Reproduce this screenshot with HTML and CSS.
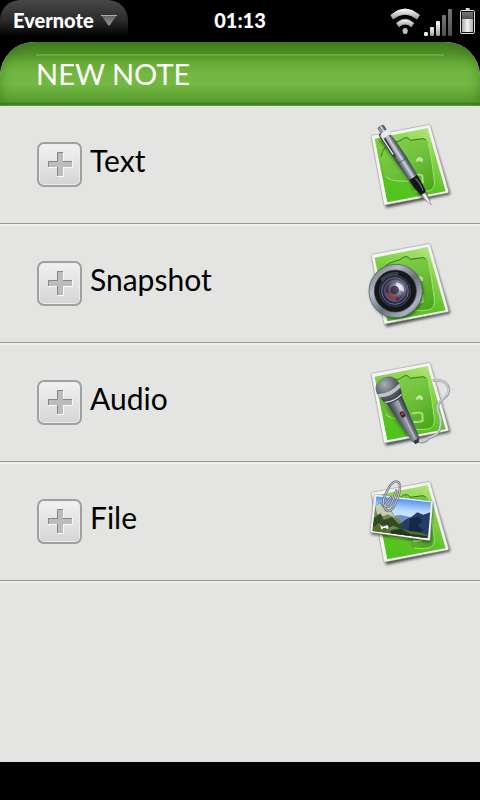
FILE: index.html
```html
<!DOCTYPE html>
<html lang="en">
<head>
<meta charset="utf-8">
<meta name="viewport" content="width=device-width, initial-scale=1">
<title>Evernote</title>
<link rel="stylesheet" href="styles.css">
</head>
<body>
<svg class="defs" aria-hidden="true">
  <defs>
    <linearGradient id="green" x1="0.8" y1="0" x2="0.4" y2="1">
      <stop offset="0" stop-color="#b4e67c"/><stop offset=".35" stop-color="#85d34a"/><stop offset=".7" stop-color="#5fc226"/><stop offset="1" stop-color="#4fc41a"/>
    </linearGradient>
    <linearGradient id="gloss" x1="0" y1="0" x2="1" y2="1">
      <stop offset="0" stop-color="#87d14e"/><stop offset=".5" stop-color="#6dbf38"/><stop offset="1" stop-color="#3f9a18"/>
    </linearGradient>
    <linearGradient id="metal" x1="0" y1="0" x2="1" y2="0">
      <stop offset="0" stop-color="#333943"/><stop offset=".3" stop-color="#7d8793"/><stop offset=".55" stop-color="#d0d6dc"/><stop offset=".75" stop-color="#707a88"/><stop offset="1" stop-color="#363b45"/>
    </linearGradient>
    <linearGradient id="tip" x1="0" y1="0" x2="1" y2="0">
      <stop offset="0" stop-color="#6b6b6b"/><stop offset=".5" stop-color="#fff"/><stop offset="1" stop-color="#555"/>
    </linearGradient>
    <linearGradient id="ring" x1="0" y1="0" x2="1" y2="1">
      <stop offset="0" stop-color="#59606c"/><stop offset=".3" stop-color="#b4bcc8"/><stop offset=".55" stop-color="#69717f"/><stop offset=".8" stop-color="#a9b1be"/><stop offset="1" stop-color="#4f5663"/>
    </linearGradient>
    <radialGradient id="lens" cx=".6" cy=".4" r=".6">
      <stop offset="0" stop-color="#e2e6ee"/><stop offset=".35" stop-color="#7c8297"/><stop offset=".65" stop-color="#4a2f43"/><stop offset="1" stop-color="#182a4c"/>
    </radialGradient>
    <radialGradient id="head" cx=".45" cy=".25" r=".75">
      <stop offset="0" stop-color="#c3c8cc"/><stop offset=".5" stop-color="#757b80"/><stop offset="1" stop-color="#35393d"/>
    </radialGradient>
    <linearGradient id="sky" x1="0" y1="0" x2="0" y2="1">
      <stop offset="0" stop-color="#2f7bea"/><stop offset=".55" stop-color="#b9d9fb"/><stop offset="1" stop-color="#e4f1fd"/>
    </linearGradient>
    <linearGradient id="signal" x1="0" y1="0" x2="0" y2="1">
      <stop offset="0" stop-color="#fff"/><stop offset="1" stop-color="#999"/>
    </linearGradient>
    <linearGradient id="dim" x1="0" y1="0" x2="0" y2="1">
      <stop offset="0" stop-color="#777"/><stop offset="1" stop-color="#505050"/>
    </linearGradient>
    <linearGradient id="cell" x1="0" y1="0" x2="1" y2="0">
      <stop offset="0" stop-color="#aaa"/><stop offset=".5" stop-color="#f4f4f4"/><stop offset="1" stop-color="#aaa"/>
    </linearGradient>
    <linearGradient id="arrow" x1="0" y1="0" x2="0" y2="1">
      <stop offset="0" stop-color="#5f5f5f"/><stop offset="1" stop-color="#969696"/>
    </linearGradient>
    <pattern id="mesh" width="6" height="6" patternUnits="userSpaceOnUse">
      <path d="M0 0L6 6M6 0L0 6" stroke="#25292c" stroke-opacity=".45" fill="none"/>
    </pattern>
    <filter id="soft" x="-20%" y="-20%" width="140%" height="140%"><feGaussianBlur stdDeviation="4"/></filter>
    <clipPath id="sheet"><path d="M44 80L203 48L257 238L82 271Z"/></clipPath>
    <clipPath id="photo"><path d="M49 82L213 100L204 208L37 186Z"/></clipPath>
    <symbol id="card" viewBox="0 0 300 330">
      <path d="M38 76L208 43L271 247L78 287Z" fill="#000" opacity=".7" filter="url(#soft)"/>
      <path d="M36 70Q33 71 34 75L71 276Q72 280 76 279L263 243Q267 242 266 238L211 41Q210 37 206 38Z" fill="#f4f5f3" stroke="#999" stroke-width="1.500"/>
      <path d="M44 80L203 48L257 238L82 271Z" fill="url(#green)"/>
      <g clip-path="url(#sheet)">
        <path d="M62 133Q63 103 99 91L120 86Q132 76 141 77Q147 80 150 85L188 80Q199 79 204 90Q216 141 224 205Q226 231 206 238L163 239Q148 238 153 218L126 207Q88 207 76 190Q64 165 62 133Z" fill="url(#gloss)" opacity=".8"/>
        <path d="M64 134Q67 100 104 91L120 86Q132 75 141 77Q146 78 150 85L180 81Q193 78 197 84" fill="none" stroke="#357713" stroke-width="3"/>
        <path d="M205 94Q216 141 223 205Q226 232 205 237Q184 241 162 237M76 192Q89 207 126 207L146 208" fill="none" stroke="#a9e07c" stroke-width="3"/>
        <path d="M155 191Q185 184 187 192L188 212Q178 218 160 215" fill="none" stroke="#a9e07c" stroke-width="6"/>
        <path d="M168 148Q172 134 183 137Q190 140 187 149Q178 143 168 148Z" fill="#bce79a" stroke="#bce79a" stroke-width="3"/>
      </g>
    </symbol>
  </defs>
</svg>

<header class="status">
  <button class="app-menu" type="button">Evernote
    <svg class="caret" viewBox="0 0 16 11" aria-hidden="true"><path d="M0 0H16L9 10Q8 11 7 10Z" fill="url(#arrow)"/><path d="M0 .5H16" stroke="#aaa"/></svg>
  </button>
  <time class="clock">01:13</time>
  <svg class="indicators" viewBox="0 0 270 96" role="img" aria-label="Wi-Fi, signal and battery">
    <path d="M3 27Q45-9 88 27L81 39Q45 10 9 39Z" fill="url(#signal)" stroke="url(#signal)" stroke-width="3" stroke-linejoin="round"/>
    <path d="M20 51Q45 28 71 51L64 62Q45 46 27 62Z" fill="url(#signal)" stroke="#aaa" stroke-width="3" stroke-linejoin="round"/>
    <rect x="38" y="66" width="15" height="18" rx="7" fill="#bbb"/>
    <rect x="102" y="78" width="12" height="12" rx="4" fill="#eee"/>
    <rect x="120" y="63" width="12" height="27" rx="4" fill="url(#signal)"/>
    <rect x="138" y="45" width="12" height="45" rx="4" fill="url(#signal)"/>
    <rect x="156" y="27" width="12" height="63" rx="4" fill="url(#dim)"/>
    <rect x="174" y="9" width="12" height="81" rx="4" fill="url(#dim)"/>
    <rect x="227" y="6" width="12" height="9" rx="2" fill="#ddd"/>
    <rect x="211.500" y="13.500" width="42" height="69" rx="4" fill="#111" stroke="#ddd" stroke-width="3"/>
    <rect x="216" y="18" width="33" height="21" fill="url(#dim)"/>
    <rect x="216" y="39" width="33" height="39" fill="url(#cell)"/>
  </svg>
</header>

<main class="panel">
  <div class="title-bar"><h1 class="title">NEW NOTE</h1></div>
  <ul class="notes">
    <li class="note">
      <button class="add" id="add-text" type="button"><svg viewBox="0 0 26 26" aria-hidden="true"><use href="#plus"/></svg></button>
      <label class="name" for="add-text">Text</label>
      <svg class="picture" viewBox="0 0 300 330" aria-hidden="true">
        <use href="#card" width="300" height="330"/>
        <path d="M64 78L156 201L193 258" stroke="#163c04" stroke-width="20" opacity=".5" filter="url(#soft)"/>
        <g transform="translate(63 46) rotate(-32.500)">
          <rect x="-10" y="-4" width="20" height="25" rx="5" fill="url(#metal)" stroke="#444"/>
          <path d="M-13 18H12Q17 70 17 118L15 182H-14L-17 118Q-18 70-13 18Z" fill="url(#metal)"/>
          <path d="M-17 119H17" stroke="#3d4550" stroke-width="2"/>
          <path d="M-14 179H15Q15 215 9 237H-8Q-15 207-14 179Z" fill="#15171b"/>
          <path d="M5 184Q10 207 4 228" stroke="#61656c" stroke-width="4" fill="none"/>
          <path d="M-9 236H10L6 260L2 277L-4 260Z" fill="url(#tip)" stroke="#555"/>
          <path d="M-14 13L-19 18L-17 92Q-13 103-8 93L-6 20Z" fill="#30363e"/>
          <path d="M-14 19L-13 89" stroke="#e5e8eb" stroke-width="4"/>
          <path d="M-12 17Q2 11 16 17L15 35Q1 28-12 34Z" fill="#e8eaec"/>
          <path d="M-7 0V13" stroke="#aab0b6" stroke-width="4"/>
        </g>
      </svg>
    </li>
    <li class="note">
      <button class="add" id="add-snapshot" type="button"><svg viewBox="0 0 26 26" aria-hidden="true"><use href="#plus"/></svg></button>
      <label class="name" for="add-snapshot">Snapshot</label>
      <svg class="picture" viewBox="0 0 300 330" aria-hidden="true">
        <use href="#card" width="300" height="330"/>
        <circle cx="110" cy="185" r="80" fill="#000" opacity=".5" filter="url(#soft)"/>
        <circle cx="107" cy="180" r="80" fill="url(#ring)" stroke="#4a505b" stroke-width="2"/>
        <circle cx="106" cy="180" r="63" fill="#15171b" stroke="#333b46" stroke-width="2"/>
        <path d="M60 145Q80 121 116 123L112 138Q86 139 71 157Z" fill="#555c60" opacity=".6"/>
        <circle cx="105" cy="180" r="47" fill="#25272c" stroke="#4c4c50" stroke-width="2"/>
        <circle cx="105" cy="180" r="40" fill="url(#lens)" stroke="#5475a4" stroke-width="3"/>
        <circle cx="105" cy="180" r="31" fill="none" stroke="#7589ad" stroke-width="2"/>
        <path d="M110 154Q134 161 132 182L114 173Q104 164 110 154Z" fill="#eceff4" opacity=".85"/>
        <path d="M76 184Q80 208 103 211Q113 203 104 191Z" fill="#a54955" opacity=".65"/>
        <circle cx="104" cy="177" r="13" fill="#202236" opacity=".75"/>
      </svg>
    </li>
    <li class="note">
      <button class="add" id="add-audio" type="button"><svg viewBox="0 0 26 26" aria-hidden="true"><use href="#plus"/></svg></button>
      <label class="name" for="add-audio">Audio</label>
      <svg class="picture" viewBox="0 0 300 330" aria-hidden="true">
        <use href="#card" width="300" height="330"/>
        <path d="M218 91Q259 86 267 118Q268 132 250 147Q228 162 235 184Q249 211 239 239Q230 260 207 264Q195 282 173 274" fill="none" stroke="#959da5" stroke-width="8"/>
        <path d="M218 90Q258 86 266 118Q266 132 249 146Q227 162 234 184Q248 211 238 238Q229 258 206 262Q194 279 173 272" fill="none" stroke="#c6cdd3" stroke-width="5"/>
        <path d="M62 150L143 261L170 250" fill="#193d09" opacity=".5" filter="url(#soft)"/>
        <g transform="translate(86 119) rotate(-27)">
          <path d="M-25 27H27L17 172Q5 181-8 172Z" fill="url(#metal)"/>
          <path d="M-25 27H27L17 172Q5 181-8 172Z" fill="#252a32" opacity=".3"/>
          <path d="M9 40L4 165" stroke="#c5ccd6" stroke-width="4" opacity=".65"/>
          <path d="M-5 171L-3 182H9L14 171Z" fill="#34383e"/>
          <path d="M-37-5Q-35-37 0-39Q35-37 37-3L29 34Q0 47-29 32Z" fill="url(#head)"/>
          <path d="M-37-5Q-35-37 0-39Q35-37 37-3L29 34Q0 47-29 32Z" fill="url(#mesh)"/>
          <path d="M-36-3Q0 13 37-2L35 10Q0 24-34 9Z" fill="#bfc4c7"/>
          <path d="M-28 29Q0 40 29 30" stroke="#ced2d4" stroke-width="4" fill="none"/>
          <rect x="-3" y="76" width="13" height="18" rx="4" fill="#23272c"/>
          <rect x="0" y="80" width="8" height="7" rx="2" fill="#f02d25"/>
        </g>
      </svg>
    </li>
    <li class="note">
      <button class="add" id="add-file" type="button"><svg viewBox="0 0 26 26" aria-hidden="true"><use href="#plus"/></svg></button>
      <label class="name" for="add-file">File</label>
      <svg class="picture" viewBox="0 0 300 330" aria-hidden="true">
        <use href="#card" width="300" height="330"/>
        <path d="M44 80L219 101L211 220L33 196Z" fill="#000" opacity=".65" filter="url(#soft)"/>
        <path d="M43 76L219 97L210 215L30 190Z" fill="#f5f7f9" stroke="#89939a"/>
        <g clip-path="url(#photo)">
          <rect x="30" y="78" width="190" height="80" fill="url(#sky)" transform="rotate(5 120 120)"/>
          <path d="M80 145L120 137L150 144L170 153L140 173L96 171Z" fill="#6c92c4"/>
          <path d="M115 175Q127 153 154 144L172 130L190 137L215 128V212L112 200Z" fill="#243e69"/>
          <path d="M150 150L174 143L188 154L174 170L190 183L170 199L145 184Z" fill="#162944"/>
          <path d="M38 116L61 99L77 119L94 125L107 146L118 149L125 160L112 201L33 190Z" fill="#718c4e"/>
          <path d="M46 111L60 102L70 118L92 126L105 146L84 136L68 142L51 134Z" fill="#c6c9bd"/>
          <path d="M41 148L62 133L71 153L96 144L116 165L131 160L123 179L98 170L80 180L58 163L38 177Z" fill="#304b26"/>
          <path d="M33 175L64 165L87 182L118 177L145 185L173 189L205 198V215L33 197Z" fill="#526d2d"/>
          <path d="M91 185L123 179L151 195L201 201V217L95 205Z" fill="#20381d"/>
          <path d="M60 169L68 173L82 168L86 174L82 181L77 176L70 177L65 182Z" fill="#fff"/>
        </g>
        <g fill="none" stroke-linecap="round">
          <path d="M93 84L79 103Q70 119 80 125Q91 129 101 114Q120 75 120 55Q120 37 108 37Q96 39 87 55L73 83Q66 105 76 112Q90 118 99 93L109 64" stroke="#6b7073" stroke-width="7"/>
          <path d="M93 84L79 103Q70 119 80 125Q91 129 101 114Q120 75 120 55Q120 37 108 37Q96 39 87 55L73 83Q66 105 76 112Q90 118 99 93L109 64" stroke="#c9cccd" stroke-width="3"/>
        </g>
      </svg>
    </li>
  </ul>
</main>
<footer class="gesture"></footer>

<svg class="defs" aria-hidden="true">
  <symbol id="plus" viewBox="0 0 26 26">
    <path d="M10 2H17V10H26V17H17V26H10V17H1V10H10Z" fill="#f8f8f8"/>
    <path d="M10 1H16V10H25V16H16V25H10V16H1V10H10Z" fill="#bcbcbc"/>
    <path d="M10.500 25V16M1.500 16V10.500H10.500V1.500H16M16 10.500H25" fill="none" stroke="#858585"/>
  </symbol>
</svg>
</body>
</html>
```
FILE: styles.css
```css
* {
  box-sizing: border-box;
}

body {
  margin: 0;
  min-height: 100vh;
  display: flex;
  flex-direction: column;
  background: #000;
  color: #000;
  font-family: Lato, "Open Sans", sans-serif;
}

.defs {
  position: absolute;
  width: 0;
  height: 0;
}

.status {
  display: grid;
  grid-template-columns: 1fr auto 1fr;
  align-items: start;
  height: 42px;
  color: #fff;
}

.app-menu {
  display: flex;
  align-items: center;
  justify-self: start;
  gap: 7px;
  height: 40px;
  padding: 0 11px 0 13px;
  border: 0;
  border-radius: 20px 20px 0 0;
  background: linear-gradient(#484848, #2b2b2b 50%, #000 92%);
  color: #fff;
  font: 900 20px/40px Lato, sans-serif;
}

.caret {
  width: 16px;
  height: 11px;
}

.clock {
  font-size: 20px;
  font-weight: 900;
  line-height: 40px;
}

.indicators {
  justify-self: end;
  width: 90px;
  height: 32px;
  margin-top: 6px;
}

.panel {
  flex: 1;
  border-radius: 34px 34px 0 0;
  background: #e4e4e2;
  overflow: hidden;
}

.title-bar {
  position: relative;
  height: 64px;
  margin-bottom: -1px;
  padding: 12px 36px 0;
  border-radius: 34px 34px 0 0;
  background: linear-gradient(#457d23, #518f29 18%, #65aa37 32%, #73b842 50%, #73b842 66%, #5fa334 88%, #5fa334 94%, #4a852a 95%, #4a852a 98%, #69b139 99%);
  box-shadow: inset 0 0 12px rgba(50, 110, 20, 0.6);
}

.title {
  margin: 0;
  border-top: 2px solid #64ad36;
  color: #fff;
  font-size: 29px;
  font-weight: 400;
  line-height: 36px;
}

.notes {
  margin: 0;
  padding: 0;
  list-style: none;
}

.note {
  display: flex;
  align-items: center;
  height: 119px;
  padding: 0 20px 0 37px;
  border-bottom: 1px solid #979795;
}

.note + .note,
.notes::after {
  box-shadow: inset 0 2px #efefed;
}

.notes::after {
  content: "";
  display: block;
  height: 2px;
}

.add {
  display: grid;
  place-items: center;
  width: 45px;
  height: 45px;
  padding: 0;
  border: 2px solid #a0a0a0;
  border-radius: 7px;
  background: linear-gradient(#f1f1f1, #d5d5d5);
  box-shadow: inset 0 0 0 1px #ececec;
}

.add svg {
  width: 26px;
  height: 26px;
}

.name {
  flex: 1;
  padding: 0 0 8px 8px;
  font-size: 30px;
  line-height: 38px;
}

.picture {
  width: 100px;
  height: 110px;
  margin-top: 6px;
}

.gesture {
  height: 38px;
}
```
